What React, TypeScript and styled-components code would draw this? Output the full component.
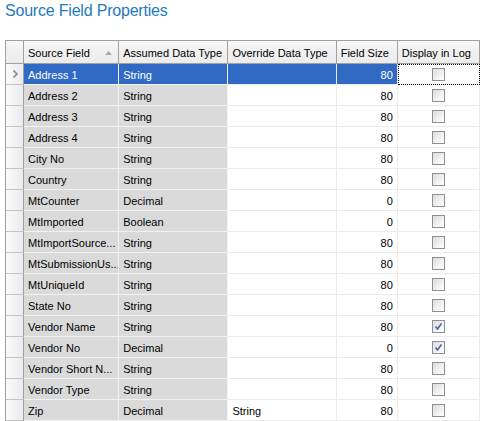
import styled, { createGlobalStyle } from 'styled-components';

type Row = {
  name: string;
  assumed: string;
  override: string;
  size: number;
  log: boolean;
};

const rows: Row[] = [
  { name: 'Address 1', assumed: 'String', override: '', size: 80, log: false },
  { name: 'Address 2', assumed: 'String', override: '', size: 80, log: false },
  { name: 'Address 3', assumed: 'String', override: '', size: 80, log: false },
  { name: 'Address 4', assumed: 'String', override: '', size: 80, log: false },
  { name: 'City No', assumed: 'String', override: '', size: 80, log: false },
  { name: 'Country', assumed: 'String', override: '', size: 80, log: false },
  { name: 'MtCounter', assumed: 'Decimal', override: '', size: 0, log: false },
  { name: 'MtImported', assumed: 'Boolean', override: '', size: 0, log: false },
  { name: 'MtImportSource...', assumed: 'String', override: '', size: 80, log: false },
  { name: 'MtSubmissionUs...', assumed: 'String', override: '', size: 80, log: false },
  { name: 'MtUniqueId', assumed: 'String', override: '', size: 80, log: false },
  { name: 'State No', assumed: 'String', override: '', size: 80, log: false },
  { name: 'Vendor Name', assumed: 'String', override: '', size: 80, log: true },
  { name: 'Vendor No', assumed: 'Decimal', override: '', size: 0, log: true },
  { name: 'Vendor Short N...', assumed: 'String', override: '', size: 80, log: false },
  { name: 'Vendor Type', assumed: 'String', override: '', size: 80, log: false },
  { name: 'Zip', assumed: 'Decimal', override: 'String', size: 80, log: false },
];

const GlobalStyle = createGlobalStyle`
  body {
    margin: 0;
    background: #ffffff;
    font-family: "Liberation Sans", Arial, sans-serif;
    overflow: hidden;
  }
`;

export default function App() {
  const selected = 0;
  return (
    <>
      <GlobalStyle />
      <Page>
        <Title>Source Field Properties</Title>
        <Grid>
          <colgroup>
            <col style={{ width: 18 }} />
            <col style={{ width: 95 }} />
            <col style={{ width: 109 }} />
            <col style={{ width: 108 }} />
            <col style={{ width: 61 }} />
            <col style={{ width: 82 }} />
          </colgroup>
          <thead>
            <tr>
              <Corner />
              <HeadCell>
                <HeadInner>
                  Source Field
                  <SortArrow viewBox="0 0 7 4" width="7" height="4">
                    <path d="M0 4 L3.5 0 L7 4 Z" fill="#a8a8a8" />
                  </SortArrow>
                </HeadInner>
              </HeadCell>
              <HeadCell>Assumed Data Type</HeadCell>
              <HeadCell>Override Data Type</HeadCell>
              <HeadCell>Field Size</HeadCell>
              <HeadCell>Display in Log</HeadCell>
            </tr>
          </thead>
          <tbody>
            {rows.map((r, i) => {
              const sel = i === selected;
              return (
                <tr key={r.name}>
                  <RowHeader>
                    {sel && (
                      <svg viewBox="0 0 5 8" width="5" height="8">
                        <path d="M0.5 0.5 L4 4 L0.5 7.5" fill="none" stroke="#8c8c8c" strokeWidth="1.6" />
                      </svg>
                    )}
                  </RowHeader>
                  <Cell $kind="ro" $selected={sel}>{r.name}</Cell>
                  <Cell $kind="ro" $selected={sel}>{r.assumed}</Cell>
                  <Cell $kind="edit" $selected={sel}>{r.override}</Cell>
                  <Cell $kind="num" $selected={sel}>{r.size}</Cell>
                  <CheckCell $focused={sel}>
                    <CheckBox>
                      {r.log && (
                        <svg viewBox="0 0 11 11" width="11" height="11">
                          <path d="M2.5 5.5 L4.5 8 L8.5 2.5" fill="none" stroke="#4a64a8" strokeWidth="1.6" />
                        </svg>
                      )}
                    </CheckBox>
                  </CheckCell>
                </tr>
              );
            })}
          </tbody>
        </Grid>
      </Page>
    </>
  );
}

const Page = styled.div`
  padding: 1px 0 0 5px;
`;

const Title = styled.div`
  font-size: 16px;
  line-height: 20px;
  letter-spacing: -0.2px;
  color: #1f7ac0;
  height: 39px;
`;

const Grid = styled.table`
  table-layout: fixed;
  width: 475px;
  border-collapse: separate;
  border-spacing: 0;
  border: 1px solid #a0a0a0;
  border-bottom: none;
  border-right: none;
  font-size: 11px;
  color: #000;
`;

const Corner = styled.th`
  height: 23px;
  padding: 0;
  box-sizing: border-box;
  background: linear-gradient(#f7f7f7, #ebebeb);
  border-right: 1px solid #a0a0a0;
  border-bottom: 1px solid #a0a0a0;
`;

const HeadCell = styled.th`
  height: 23px;
  padding: 1px 4px 0;
  box-sizing: border-box;
  text-align: left;
  font-weight: normal;
  white-space: nowrap;
  overflow: hidden;
  background: linear-gradient(#f7f7f7, #ebebeb);
  border-right: 1px solid #a0a0a0;
  border-bottom: 1px solid #a0a0a0;
`;

const HeadInner = styled.div`
  display: flex;
  align-items: center;
  justify-content: space-between;
  padding-right: 2px;
`;

const SortArrow = styled.svg`
  display: block;
`;

const RowHeader = styled.td`
  height: 21px;
  padding: 0 0 0 7px;
  box-sizing: border-box;
  background: linear-gradient(to right, #fbfbfb, #eaeaee);
  border-right: 1px solid #a0a0a0;
  border-bottom: 1px solid #c4c4c4;
  vertical-align: middle;
  svg {
    display: block;
  }
`;

const cellBg = (kind: string, selected: boolean) => {
  if (selected) return '#316ac5';
  return kind === 'ro' ? '#dadada' : '#ffffff';
};

const Cell = styled.td<{ $kind: 'ro' | 'edit' | 'num'; $selected: boolean }>`
  height: 21px;
  padding: 1px 4px 0;
  box-sizing: border-box;
  white-space: nowrap;
  overflow: hidden;
  text-align: ${(p) => (p.$kind === 'num' ? 'right' : 'left')};
  background: ${(p) => cellBg(p.$kind, p.$selected)};
  color: ${(p) => (p.$selected ? '#ffffff' : '#000000')};
  border-right: 1px solid ${(p) => (p.$kind === 'ro' ? '#f2f2f2' : '#ebebeb')};
  border-bottom: 1px solid ${(p) => (p.$kind === 'ro' ? '#f2f2f2' : '#ebebeb')};
`;

const CheckCell = styled.td<{ $focused: boolean }>`
  height: 21px;
  padding: 0;
  box-sizing: border-box;
  background: #ffffff;
  border-right: 1px solid #ebebeb;
  border-bottom: 1px solid #ebebeb;
  outline: ${(p) => (p.$focused ? '1px dotted #000' : 'none')};
  outline-offset: -1px;
  vertical-align: middle;
`;

const CheckBox = styled.div`
  width: 13px;
  height: 13px;
  box-sizing: border-box;
  margin: 0 auto;
  border: 1px solid #8e8f8f;
  background: linear-gradient(135deg, #dcdcdc, #f6f6f6 70%, #ffffff);
  display: flex;
  align-items: center;
  justify-content: center;
  svg {
    display: block;
  }
`;
